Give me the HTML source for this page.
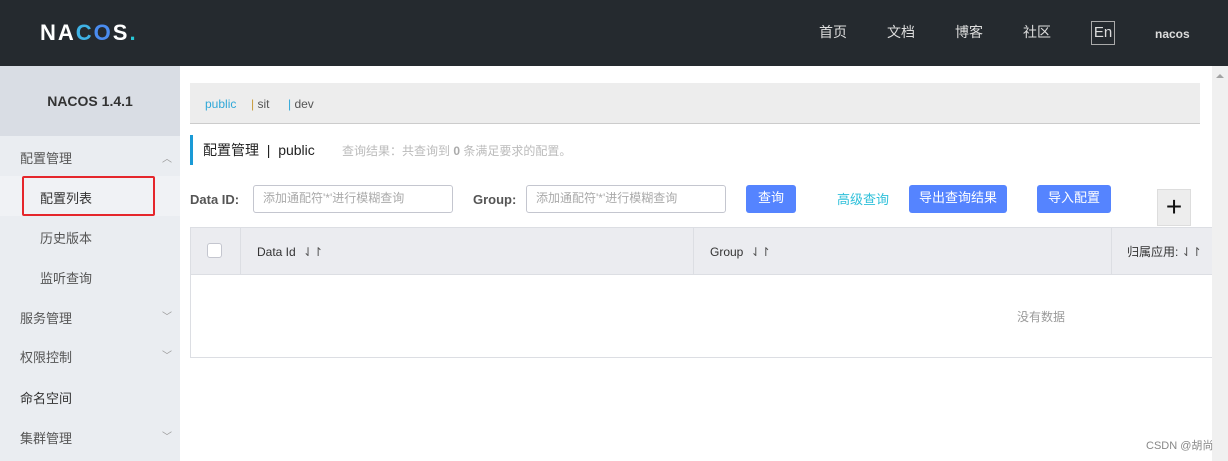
<!DOCTYPE html>
<html><head><meta charset="utf-8"><style>
*{margin:0;padding:0;box-sizing:border-box}
body{width:1228px;height:461px;overflow:hidden;position:relative;background:#fff;font-family:"Liberation Sans","Noto Sans CJK SC",sans-serif;font-size:13px;color:#333}
.a{position:absolute;white-space:nowrap}
.hdr{left:0;top:0;width:1228px;height:66px;background:#252a2f}
.nav{top:22px;color:#ddd;font-size:14px}
.side{left:0;top:66px;width:180px;height:395px;background:#eaedf1}
.st{left:0;top:66px;width:180px;height:70px;background:#d9dde4;text-align:center;line-height:70px;font-weight:bold;font-size:14px;color:#333}
.mi{left:20px;font-size:13px;color:#555}
.chev{left:162px;color:#999;font-size:10px}
.btn{background:#5584ff;color:#fff;border-radius:3px;height:28px;line-height:26px;text-align:center;font-size:13px}
.inp{height:28px;border:1px solid #c4c6cf;border-radius:3px;padding-left:9px;line-height:24px;color:#aaa;font-size:12px}
.lbl{font-weight:bold;color:#555;font-size:13px}
</style></head><body>
<div class="a hdr"></div>
<div class="a" style="left:40px;top:20px;font-size:22px;font-weight:bold;color:#fff;letter-spacing:2px">NA<span style="color:#3fb2e5">C</span><span style="color:#4a8cf0">O</span>S<span style="color:#27c7d6">.</span></div>
<div class="a nav" style="left:819px">首页</div>
<div class="a nav" style="left:887px">文档</div>
<div class="a nav" style="left:955px">博客</div>
<div class="a nav" style="left:1023px">社区</div>
<div class="a" style="left:1091px;top:21px;width:24px;height:24px;border:1px solid #aaa;color:#ddd;font-size:15px;text-align:center;line-height:22px">En</div>
<div class="a" style="left:1155px;top:27px;color:#ddd;font-size:12px;font-weight:bold">nacos</div>

<div class="a side"></div>
<div class="a st">NACOS 1.4.1</div>
<div class="a" style="left:0;top:176px;width:180px;height:40px;background:#f0f2f5"></div>
<div class="a" style="left:22px;top:176px;width:133px;height:40px;border:2px solid #e5262b;border-radius:2px"></div>
<div class="a mi" style="top:148px">配置管理</div><div class="a chev" style="top:150px">︿</div>
<div class="a mi" style="left:40px;top:188px;color:#333">配置列表</div>
<div class="a mi" style="left:40px;top:228px">历史版本</div>
<div class="a mi" style="left:40px;top:268px">监听查询</div>
<div class="a mi" style="top:308px">服务管理</div><div class="a chev" style="top:308px">﹀</div>
<div class="a mi" style="top:347px">权限控制</div><div class="a chev" style="top:347px">﹀</div>
<div class="a mi" style="top:388px;color:#333">命名空间</div>
<div class="a mi" style="top:428px">集群管理</div><div class="a chev" style="top:428px">﹀</div>

<div class="a" style="left:190px;top:83px;width:1010px;height:41px;background:#ededed;border-bottom:1px solid #ccc"></div>
<div class="a" style="left:205px;top:97px;font-size:12px;color:#30a8d8">public</div>
<div class="a" style="left:251px;top:97px;font-size:12px;color:#555"><span style="color:#c89a3a">|</span> sit</div>
<div class="a" style="left:288px;top:97px;font-size:12px;color:#555"><span style="color:#30a8d8">|</span> dev</div>

<div class="a" style="left:190px;top:135px;width:3px;height:30px;background:#1a9ad6"></div>
<div class="a" style="left:203px;top:140px;font-size:14px;color:#222">配置管理 &nbsp;|&nbsp; public</div>
<div class="a" style="left:342px;top:142px;font-size:12px;color:#bbb">查询结果：共查询到 <b style="color:#aaa">0</b> 条满足要求的配置。</div>

<div class="a lbl" style="left:190px;top:192px">Data ID:</div>
<div class="a inp" style="left:253px;top:185px;width:200px">添加通配符'*'进行模糊查询</div>
<div class="a lbl" style="left:473px;top:192px">Group:</div>
<div class="a inp" style="left:526px;top:185px;width:200px">添加通配符'*'进行模糊查询</div>
<div class="a btn" style="left:746px;top:185px;width:50px">查询</div>
<div class="a" style="left:837px;top:189px;color:#2fc0da;font-size:13px">高级查询</div>
<div class="a btn" style="left:909px;top:185px;width:98px">导出查询结果</div>
<div class="a btn" style="left:1037px;top:185px;width:74px">导入配置</div>
<div class="a" style="left:1157px;top:189px;width:34px;height:37px;background:#ededed;border:1px solid #ddd;text-align:center;line-height:34px;font-size:28px;color:#111">+</div>

<div class="a" style="left:190px;top:227px;width:1030px;height:131px;border:1px solid #dcdee3"></div>
<div class="a" style="left:191px;top:228px;width:1021px;height:47px;background:#ebecf0;border-bottom:1px solid #dcdee3"></div>
<div class="a" style="left:240px;top:228px;width:1px;height:47px;background:#dcdee3"></div>
<div class="a" style="left:693px;top:228px;width:1px;height:47px;background:#dcdee3"></div>
<div class="a" style="left:1111px;top:228px;width:1px;height:47px;background:#dcdee3"></div>
<div class="a" style="left:207px;top:243px;width:15px;height:15px;background:#fff;border:1px solid #c4c6cf;border-radius:3px"></div>
<div class="a" style="left:257px;top:245px;font-size:12px;color:#333">Data Id <span style="color:#555;margin-left:4px">⇃↾</span></div>
<div class="a" style="left:710px;top:245px;font-size:12px;color:#333">Group <span style="color:#555;margin-left:4px">⇃↾</span></div>
<div class="a" style="left:1127px;top:243px;font-size:12px;color:#333">归属应用: <span style="color:#555">⇃↾</span></div>
<div class="a" style="left:1017px;top:308px;font-size:12px;color:#999">没有数据</div>

<div class="a" style="left:1212px;top:66px;width:16px;height:395px;background:#f0f0f0"></div>
<div class="a" style="left:1216px;top:74px;width:0;height:0;border-left:4px solid transparent;border-right:4px solid transparent;border-bottom:4px solid #a3a3a3"></div>
<div class="a" style="left:1146px;top:437px;font-size:11px;color:#888">CSDN @胡尚</div>
</body></html>
